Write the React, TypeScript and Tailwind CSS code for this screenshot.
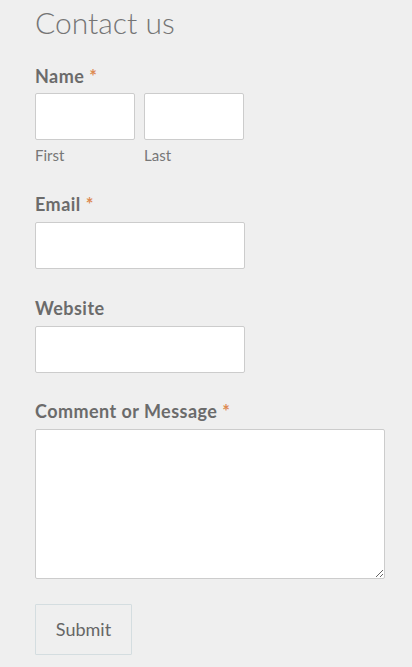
import React from 'react';

const Req = () => <span className="text-[#dd8a52] font-bold ml-[5px]">*</span>;

const inputCls = 'block h-[47px] bg-white border border-[#cccccc] rounded-[2px]';
const labelCls = 'block text-[18px] font-bold leading-[24px] tracking-[0.45px]';

const App: React.FC = () => {
  return (
    <div className="min-h-[667px] bg-[#efefef] px-[35px] pt-[2px] text-[#6b6b6b] font-['Lato','Open_Sans',sans-serif]">
      <h1 className="text-[30px] font-light leading-[40px] text-[#757575]">Contact us</h1>

      <form className="mt-[22px]" onSubmit={e => e.preventDefault()}>
        <label className={labelCls}>
          Name<Req />
        </label>
        <div className="mt-[5px] flex gap-[9px]">
          <div className="w-[100px]">
            <input className={`${inputCls} w-full`} />
            <span className="block mt-[6px] text-[15px] leading-[18px] text-[#777]">First</span>
          </div>
          <div className="w-[100px]">
            <input className={`${inputCls} w-full`} />
            <span className="block mt-[6px] text-[15px] leading-[18px] text-[#777]">Last</span>
          </div>
        </div>

        <label className={`${labelCls} mt-[28px]`}>
          Email<Req />
        </label>
        <input className={`${inputCls} mt-[6px] w-[210px]`} />

        <label className={`${labelCls} mt-[27px]`}>Website</label>
        <input className={`${inputCls} mt-[6px] w-[210px]`} />

        <label className={`${labelCls} mt-[26px]`}>
          Comment or Message<Req />
        </label>
        <textarea className="block mt-[6px] w-[350px] h-[150px] bg-white border border-[#cccccc] rounded-[2px]" />

        <button
          type="submit"
          className="mt-[25px] w-[97px] h-[51px] border border-[#d4dde0] bg-[#efefef] text-[18px] text-[#666] rounded-[1px]"
        >
          Submit
        </button>
      </form>
    </div>
  );
};

export default App;
